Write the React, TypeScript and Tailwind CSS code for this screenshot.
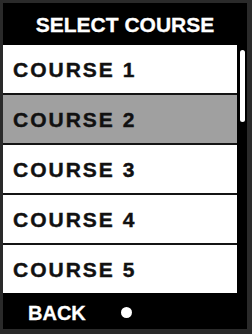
import React from "react";

const courses = ["COURSE 1", "COURSE 2", "COURSE 3", "COURSE 4", "COURSE 5"];

export default function App() {
  return (
    <div
      className="w-[252px] h-[334px] bg-[#2a2a2a] pt-[3px] pl-[3px] pr-[5px] pb-[5px]"
      style={{ fontFamily: '"Liberation Sans", Arial, sans-serif' }}
    >
      <div className="w-full h-full bg-black flex flex-col">
        <div className="h-[42px] flex items-center justify-center">
          <span className="text-white font-bold text-[21px] leading-none [-webkit-text-stroke:0.3px_white]">SELECT COURSE</span>
        </div>
        <div className="flex h-[248px]">
          <div className="w-[234px] flex flex-col gap-[2px] bg-[#141414]">
            {courses.map((c, i) => (
              <div
                key={c}
                className={`h-[48px] flex items-center pl-[10px] ${i === 1 ? "bg-[#a0a0a0]" : "bg-white"}`}
              >
                <span className="text-[#111] font-bold text-[21px] leading-none tracking-[2px] [-webkit-text-stroke:0.4px_#111]">{c}</span>
              </div>
            ))}
          </div>
          <div className="flex-1 pl-[3px]">
            <div className="mt-[5px] w-[5px] h-[72px] rounded-full bg-white" />
          </div>
        </div>
        <div className="flex-1 flex items-center pl-[25px] pt-[3px]">
          <span className="text-white font-bold text-[20px] leading-none [-webkit-text-stroke:0.3px_white]">BACK</span>
          <div className="ml-[35px] w-[11px] h-[11px] rounded-full bg-white" />
        </div>
      </div>
    </div>
  );
}
